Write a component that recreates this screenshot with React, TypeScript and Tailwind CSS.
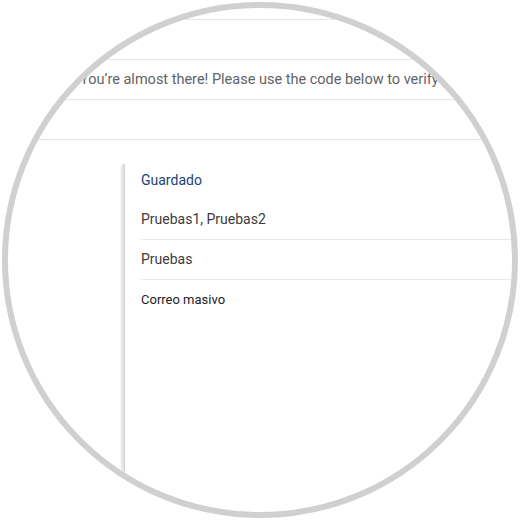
export default function App() {
  return (
    <div className="w-[520px] h-[520px] bg-white relative" style={{ fontFamily: 'Roboto, "Liberation Sans", sans-serif' }}>
      <div className="absolute left-[2px] top-[2px] w-[516px] h-[516px] rounded-full border-[6px] border-[#d0d0d0] overflow-hidden bg-white">
        <div className="ml-[-8px] mt-[-8px] w-[520px]">
          {/* email header rows */}
          <div className="h-[20px] border-b border-[#e3e8ee]" />
          <div className="h-[40px] border-b border-[#e3e8ee]" />
          <div className="h-[40px] border-b border-[#e3e8ee] flex items-center pl-[80px]">
            <span className="text-[14.5px] text-[#5f6368] whitespace-nowrap">
              You’re almost there! Please use the code below to verify your account
            </span>
          </div>
          <div className="h-[40px] border-b border-[#e3e8ee]" />

          {/* labels panel */}
          <div className="flex pl-[120px] pt-[24px]">
            <div className="w-[5px] h-[400px] rounded-tl-[4px] bg-gradient-to-r from-[#fafafa] to-[#d2d2d2]" />
            <div className="flex-1 pl-[16px] mt-[-4px]">
              <div className="h-[40px] flex items-center text-[14px] text-[#1d3f77]">Guardado</div>
              <div className="h-[40px] flex items-center border-b border-[#e8e8e8] text-[14px] text-[#3c3c3c]">Pruebas1, Pruebas2</div>
              <div className="h-[40px] flex items-center border-b border-[#e8e8e8] text-[14px] text-[#3c3c3c]">Pruebas</div>
              <div className="h-[40px] flex items-center text-[13px] text-[#222]">Correo masivo</div>
            </div>
          </div>
        </div>
      </div>
    </div>
  )
}
